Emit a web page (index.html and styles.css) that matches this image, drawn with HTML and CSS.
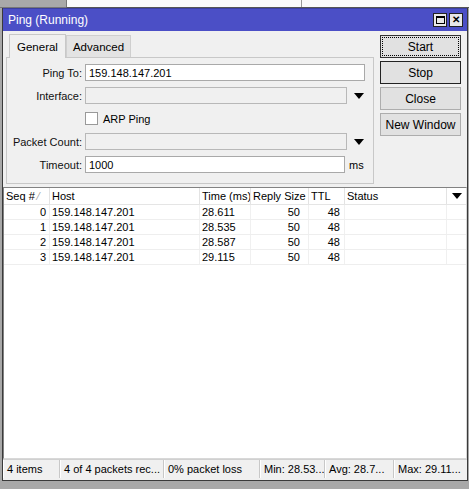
FILE: index.html
```html
<!DOCTYPE html>
<html>
<head>
<meta charset="utf-8">
<link rel="stylesheet" href="styles.css">
</head>
<body>
<div class="behind">
  <div class="behind-left"></div>
  <div class="behind-right"><span class="behind-sep"></span></div>
</div>
<div class="window">
  <div class="titlebar">
    <span class="title">Ping (Running)</span>
    <div class="tb-btns">
      <span class="tb-btn"><span class="max-box"></span></span>
      <span class="tb-btn close">&#x2715;</span>
    </div>
  </div>
  <div class="top">
    <div class="left">
      <div class="tabs">
        <span class="tab active">General</span>
        <span class="tab">Advanced</span>
      </div>
      <div class="panel">
        <div class="row">
          <label class="lbl">Ping To:</label>
          <div class="input wide">159.148.147.201</div>
        </div>
        <div class="row">
          <label class="lbl">Interface:</label>
          <div class="input dis combo"></div>
          <span class="arrow"></span>
        </div>
        <div class="row chk-row">
          <span class="lbl"></span>
          <span class="checkbox"></span>
          <span class="chk-label">ARP Ping</span>
        </div>
        <div class="row">
          <label class="lbl">Packet Count:</label>
          <div class="input dis combo"></div>
          <span class="arrow"></span>
        </div>
        <div class="row">
          <label class="lbl">Timeout:</label>
          <div class="input timeout">1000</div>
          <span class="unit">ms</span>
        </div>
      </div>
    </div>
    <div class="buttons">
      <div class="btn focused">Start</div>
      <div class="btn default">Stop</div>
      <div class="btn">Close</div>
      <div class="btn">New Window</div>
    </div>
  </div>
  <div class="table">
    <div class="thead">
      <span class="c seq">Seq # <span class="sort">&#x2044;</span></span>
      <span class="c host">Host</span>
      <span class="c time">Time (ms)</span>
      <span class="c size">Reply Size</span>
      <span class="c ttl">TTL</span>
      <span class="c status">Status</span>
      <span class="c menu"><span class="arrow small"></span></span>
    </div>
    <div class="tr">
      <span class="c seq r">0</span><span class="c host">159.148.147.201</span><span class="c time">28.611</span><span class="c size r">50</span><span class="c ttl r">48</span><span class="c status"></span><span class="c menu"></span>
    </div>
    <div class="tr">
      <span class="c seq r">1</span><span class="c host">159.148.147.201</span><span class="c time">28.535</span><span class="c size r">50</span><span class="c ttl r">48</span><span class="c status"></span><span class="c menu"></span>
    </div>
    <div class="tr">
      <span class="c seq r">2</span><span class="c host">159.148.147.201</span><span class="c time">28.587</span><span class="c size r">50</span><span class="c ttl r">48</span><span class="c status"></span><span class="c menu"></span>
    </div>
    <div class="tr">
      <span class="c seq r">3</span><span class="c host">159.148.147.201</span><span class="c time">29.115</span><span class="c size r">50</span><span class="c ttl r">48</span><span class="c status"></span><span class="c menu"></span>
    </div>
    <div class="tfill"></div>
  </div>
  <div class="statusbar">
    <span class="sb s1">4 items</span>
    <span class="sb s2">4 of 4 packets rec...</span>
    <span class="sb s3">0% packet loss</span>
    <span class="sb s4">Min: 28.53...</span>
    <span class="sb s5">Avg: 28.7...</span>
    <span class="sb s6">Max: 29.11...</span>
  </div>
</div>
</body>
</html>
```

FILE: styles.css
```css
* { box-sizing: border-box; }
html, body { margin: 0; padding: 0; }
body {
  width: 469px;
  height: 489px;
  background: #a8a8a8;
  font-family: "Liberation Sans", Arial, sans-serif;
  font-size: 11px;
  color: #000;
  overflow: hidden;
}
.behind {
  display: flex;
  height: 8px;
}
.behind-left {
  width: 66px;
  background: #a9a9a9;
  border-bottom: 1px solid #777;
}
.behind-right {
  flex: 1;
  background: #fafafa;
  border-left: 1px solid #777;
  border-bottom: 1px solid #555;
  position: relative;
}
.behind-sep {
  position: absolute;
  left: 234px;
  top: 0;
  width: 1px;
  height: 7px;
  background: #999;
}
.window {
  margin-left: 2px;
  width: 466px;
  height: 473px;
  background: #f0f0f0;
  border: 1px solid #3a3a3a;
  border-top: none;
  display: flex;
  flex-direction: column;
}
.titlebar {
  height: 23px;
  background: #4b4fc6;
  color: #fff;
  display: flex;
  align-items: center;
  justify-content: space-between;
  padding: 0 4px 0 5px;
  border-top: 1px solid #3c3fa0;
}
.title { font-size: 12px; }
.tb-btns { display: flex; gap: 2px; }
.tb-btn {
  width: 14px;
  height: 14px;
  background: #e8e8e8;
  border: 1px solid #222;
  display: flex;
  align-items: center;
  justify-content: center;
  color: #000;
  font-size: 10px;
  font-weight: bold;
  line-height: 1;
}
.max-box {
  width: 9px;
  height: 8px;
  border: 1px solid #000;
  border-top-width: 2px;
}
.top {
  display: flex;
  padding: 2px 0 0 3px;
}
.left { width: 368px; }
.tabs {
  display: flex;
  height: 24px;
  align-items: flex-end;
  padding-left: 3px;
  position: relative;
  z-index: 1;
}
.tab {
  height: 22px;
  padding: 5px 6px 0 6px;
  background: #e3e3e3;
  border: 1px solid #cfcfcf;
  border-bottom: none;
  font-size: 11.5px;
}
.tab.active {
  height: 24px;
  background: #f0f0f0;
  padding: 6px 7px 0 7px;
  border-color: #c8c8c8;
  margin-bottom: -1px;
}
.panel {
  border: 1px solid #c8c8c8;
  height: 127px;
  padding: 6px 0 0 0;
  display: flex;
  flex-direction: column;
  gap: 6px;
}
.row {
  display: flex;
  align-items: center;
  height: 17px;
}
.lbl {
  width: 78px;
  text-align: right;
  padding-right: 3px;
  color: #111;
}
.input {
  height: 17px;
  border: 1px solid #a9a9a9;
  background: #fff;
  padding: 1px 3px;
  line-height: 14px;
}
.input.wide { width: 280px; }
.input.combo { width: 262px; }
.input.dis { background: #f0f0f0; border-color: #b8b8b8; }
.input.timeout { width: 260px; }
.arrow {
  width: 0; height: 0;
  border-left: 5px solid transparent;
  border-right: 5px solid transparent;
  border-top: 6px solid #000;
  margin-left: 7px;
}
.unit { margin-left: 4px; }
.checkbox {
  width: 13px;
  height: 13px;
  border: 1px solid #999;
  background: #fff;
}
.chk-label { margin-left: 5px; }
.buttons {
  margin-left: 6px;
  margin-top: 2px;
  display: flex;
  flex-direction: column;
  gap: 3px;
}
.btn {
  width: 81px;
  height: 23px;
  border: 1px solid #adadad;
  background: #e1e1e1;
  display: flex;
  align-items: center;
  justify-content: center;
  font-size: 12px;
}
.btn.focused {
  border: 1px solid #333;
  outline: 1px dotted #000;
  outline-offset: -3px;
}
.btn.default { border: 1px solid #222; }
.table {
  margin: 3px 0 0 0;
  border: 1px solid #828282;
  border-right: 1px solid #d8d8d8;
  border-bottom: 1px solid #d8d8d8;
  background: #fff;
  flex: 1;
  display: flex;
  flex-direction: column;
}
.thead, .tr {
  display: flex;
}
.thead { height: 17px; border-bottom: 1px solid #e5e5e5; line-height: 16px; }
.tr { border-bottom: 1px solid #eeeeee; height: 15px; line-height: 14px; }
.c {
  border-right: 1px solid #e3e3e3;
  padding: 0 2px;
  white-space: nowrap;
  overflow: hidden;
  font-size: 11px;
}
.r { text-align: right; }
.seq { width: 46px; }
.host { width: 150px; }
.time { width: 51px; }
.size { width: 58px; }
.ttl { width: 36px; }
.status { width: 102px; }
.menu { flex: 1; border-right: none; display: flex; align-items: center; justify-content: center; }
.tr .c { border-right-color: #f0f0f0; }
.tr .seq { padding-right: 3px; }
.tr .size { padding-right: 8px; }
.tr .ttl { padding-right: 4px; }
.sort { color: #999; font-size: 10px; }
.arrow.small { margin-left: 0; }
.tfill { flex: 1; }
.statusbar {
  display: flex;
  height: 19px;
  border-top: 1px solid #d0d0d0;
  margin-bottom: 2px;
}
.sb {
  border-right: 1px solid #c8c8c8;
  border-left: 1px solid #fff;
  padding: 3px 3px 0;
  white-space: nowrap;
  overflow: hidden;
}
.s1 { width: 57px; }
.s2 { width: 104px; }
.s3 { width: 96px; }
.s4 { width: 65px; }
.s5 { width: 69px; }
.s6 { flex: 1; border-right: none; }
```
